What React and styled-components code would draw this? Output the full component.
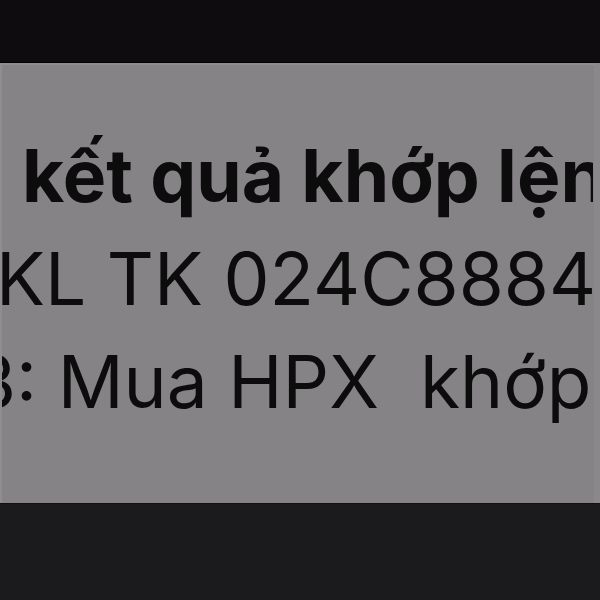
import React from "react"
import styled, { createGlobalStyle } from "styled-components"

const GlobalStyle = createGlobalStyle`
  html, body {
    margin: 0;
    padding: 0;
    background: #0e0c0e;
  }
`

function App() {
  return (
    <>
      <GlobalStyle />
      <Screen>
        <TopBar />
        <Banner>
          <Message>
            <Line bold offset={20}>kết quả khớp lệnh</Line>
            <Line offset={-6}>KL TK 024C8884 khớp</Line>
            <Line offset={-31}>3: Mua HPX&nbsp;&nbsp;khớp 1000</Line>
          </Message>
        </Banner>
        <BottomBar />
      </Screen>
    </>
  )
}

export default App

const Screen = styled.div`
  width: 600px;
  height: 600px;
  display: flex;
  flex-direction: column;
  overflow: hidden;
`

const TopBar = styled.div`
  height: 62px;
  flex-shrink: 0;
  background: #0e0c0e;
  border-bottom: 1px solid #050405;
`

const Banner = styled.div`
  height: 440px;
  flex-shrink: 0;
  display: flex;
  background: #858385;
  box-shadow: inset 2px 0 0 #8f8d8f, inset -6px 0 0 #8a888a,
    inset 0 2px 0 #8e8c8e;
  padding: 61px 7px 0 2px;
  box-sizing: border-box;
  overflow: hidden;
`

const Message = styled.div`
  flex: 1;
  min-width: 0;
  display: flex;
  flex-direction: column;
  overflow: hidden;
  font-family: Inter, "Liberation Sans", sans-serif;
  color: #0d0c0d;
`

const Line = styled.div`
  white-space: nowrap;
  font-size: 73px;
  line-height: 103px;
  font-weight: ${(p) => (p.bold ? 700 : 400)};
  margin-left: ${(p) => p.offset}px;
`

const BottomBar = styled.div`
  flex: 1;
  background: #1b1b1e;
  border-top: 1px solid #111113;
`
